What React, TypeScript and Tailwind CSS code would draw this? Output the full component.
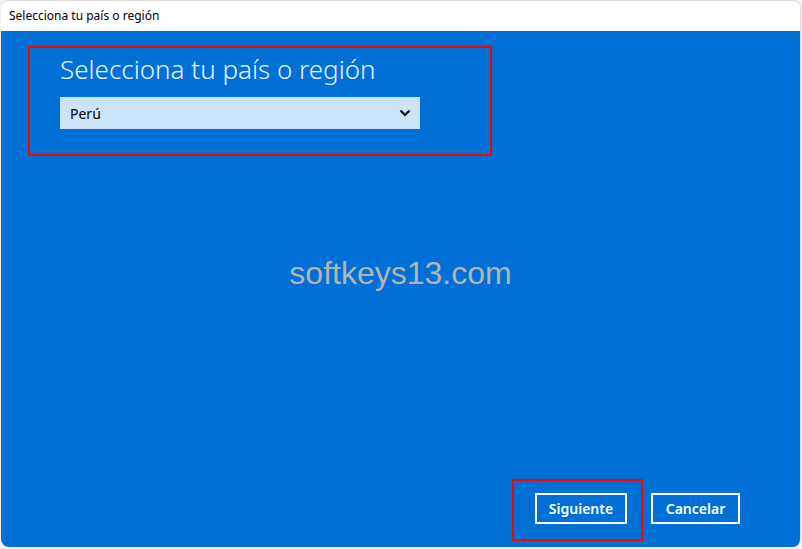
import React from "react";

const App = () => {
  return (
    <div className="w-[802px] h-[549px] bg-[#f3f3f3] overflow-hidden font-['Noto_Sans',sans-serif]">
      <div className="w-[800px] h-[547px] ml-px flex flex-col rounded-lg overflow-hidden border-t border-r border-[#d9d9d9]">
        {/* Title bar */}
        <header className="h-[30px] bg-white flex items-center px-[8px] text-[12px] text-black">
          Selecciona tu país o región
        </header>

        {/* Body */}
        <main className="relative flex-1 bg-[#0070d6] flex flex-col">
          <section className="mt-[15px] ml-[27px] w-[464px] h-[110px] border-2 border-[#ff0000] pl-[30px] pt-[3px]">
            <h1 className="text-[26px] font-light text-[#e9f2fc] leading-[36px]">
              Selecciona tu país o región
            </h1>
            <div className="mt-[10px] w-[360px] h-[32px] bg-[#cce4f7] flex items-center justify-between pl-[10px] pr-[9px]">
              <span className="text-[14px] text-black">Perú</span>
              <svg width="12" height="8" viewBox="0 0 12 8">
                <path d="M1.5 1.5 L6 6 L10.5 1.5" fill="none" stroke="#000" strokeWidth="2.2" />
              </svg>
            </div>
          </section>

          <div className="absolute inset-x-0 top-[218px] text-center text-[32px] text-[#b4b4b4] font-['Liberation_Sans',sans-serif]">
            softkeys13.com
          </div>

          <footer className="mt-auto mb-[6px] mr-[60px] flex justify-end items-start gap-[8px]">
            <div className="border-2 border-[#ff0000] pl-[21px] pr-[14px] pt-[12px] pb-[15px]">
              <button className="w-[92px] h-[31px] border-2 border-white text-white text-[14px] font-semibold">
                Siguiente
              </button>
            </div>
            <button className="mt-[14px] w-[89px] h-[31px] border-2 border-white text-white text-[14px] font-semibold">
              Cancelar
            </button>
          </footer>
        </main>
      </div>
    </div>
  );
};

export default App;
